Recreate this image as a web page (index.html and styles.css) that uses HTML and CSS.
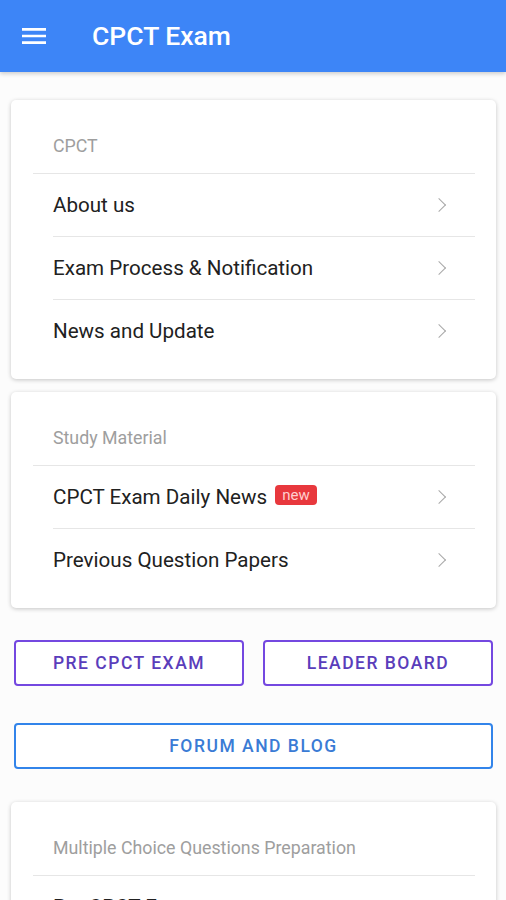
FILE: index.html
```html
<!DOCTYPE html>
<html lang="en">

<head>
    <meta charset="UTF-8">
    <meta name="viewport" content="width=device-width, initial-scale=1.0">
    <title>CPCT Exam</title>
    <link rel="stylesheet" href="styles.css">
</head>

<body>
    <header class="toolbar">
        <svg class="menu-icon" viewBox="0 0 24 24" width="32" height="32">
            <path d="M3 18h18v-2H3v2zm0-5h18v-2H3v2zm0-7v2h18V6H3z" fill="#fff"/>
        </svg>
        <span class="toolbar-title">CPCT Exam</span>
    </header>

    <main class="content">
        <section class="card">
            <div class="card-header">CPCT</div>
            <a class="row" href="#"><span>About us</span><span class="chevron"></span></a>
            <a class="row" href="#"><span>Exam Process &amp; Notification</span><span class="chevron"></span></a>
            <a class="row" href="#"><span>News and Update</span><span class="chevron"></span></a>
        </section>

        <section class="card">
            <div class="card-header">Study Material</div>
            <a class="row" href="#"><span>CPCT Exam Daily News <span class="badge">new</span></span><span class="chevron"></span></a>
            <a class="row" href="#"><span>Previous Question Papers</span><span class="chevron"></span></a>
        </section>

        <div class="buttons">
            <button class="btn btn-purple">Pre CPCT Exam</button>
            <button class="btn btn-purple">Leader Board</button>
        </div>

        <div class="buttons single">
            <button class="btn btn-blue">Forum and Blog</button>
        </div>

        <section class="card">
            <div class="card-header">Multiple Choice Questions Preparation</div>
            <a class="row" href="#"><span>Pre CPCT Exam</span><span class="chevron"></span></a>
            <a class="row" href="#"><span>Computer Awareness</span><span class="chevron"></span></a>
        </section>
    </main>
</body>

</html>
```

FILE: styles.css
```css
body {
    margin: 0;
    font-family: Roboto, 'Noto Sans', Arial, sans-serif;
    background-color: #fcfcfc;
    color: #212121;
}

.toolbar {
    height: 72px;
    display: flex;
    align-items: center;
    background-color: #3d85f7;
    box-shadow: 0 2px 4px rgba(0, 0, 0, 0.18);
    color: white;
}

.menu-icon {
    margin-left: 18px;
}

.toolbar-title {
    margin-left: 42px;
    margin-bottom: 1px;
    font-size: 26.5px;
    font-weight: 500;
}

.content {
    padding: 28px 10px 0 11px;
}

.card {
    background-color: white;
    border-radius: 5px;
    box-shadow: 0 1px 4px rgba(0, 0, 0, 0.22);
    padding: 0 21px 17px 22px;
    margin-bottom: 13px;
}

.card-header {
    padding: 32px 0 13px 20px;
    line-height: 28px;
    font-size: 17.8px;
    color: #9e9e9e;
    border-bottom: 1px solid #e6e6e6;
}

.row {
    display: flex;
    align-items: center;
    justify-content: space-between;
    height: 62px;
    margin-left: 20px;
    padding-right: 31px;
    font-size: 20.6px;
    color: #212121;
    text-decoration: none;
}

.row + .row {
    border-top: 1px solid #e6e6e6;
}

.chevron {
    width: 9px;
    height: 9px;
    border-top: 1.6px solid #a8a8a8;
    border-right: 1.6px solid #a8a8a8;
    transform: rotate(45deg);
}

.badge {
    display: inline-block;
    position: relative;
    top: -4px;
    margin-left: 3px;
    padding: 0 7px;
    line-height: 20px;
    font-size: 15px;
    color: #ffcfcf;
    background-color: #e8383d;
    border-radius: 4px;
}

.buttons {
    display: flex;
    gap: 19px;
    margin: 32px 3px 0 3px;
}

.buttons.single {
    margin-top: 37px;
    margin-bottom: 33px;
}

.btn {
    flex: 1;
    height: 46px;
    background-color: white;
    border-radius: 4px;
    font-family: Roboto, 'Noto Sans', Arial, sans-serif;
    font-size: 17.5px;
    font-weight: 500;
    letter-spacing: 1.5px;
    text-transform: uppercase;
}

.btn-purple {
    border: 2px solid #7448e0;
    color: #5a3dbb;
}

.btn-blue {
    border: 2px solid #3284ea;
    color: #3a7bd5;
}
```
